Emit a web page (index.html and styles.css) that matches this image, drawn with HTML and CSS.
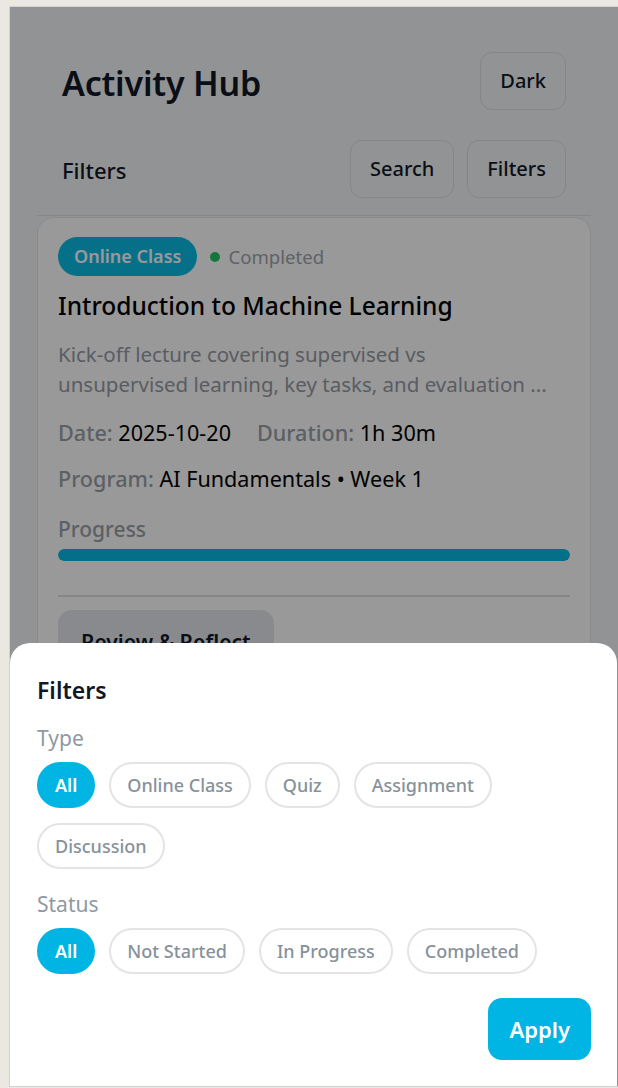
FILE: index.html
```html
<!DOCTYPE html>
<html lang="en">
<head>
<meta charset="utf-8">
<title>Activity Hub</title>
<link rel="stylesheet" href="styles.css">
</head>
<body>
<div class="frame">
  <div class="app">
    <header class="header">
      <div class="header-row">
        <h1 class="title">Activity Hub</h1>
        <button class="btn">Dark</button>
      </div>
      <div class="header-row row2">
        <h2 class="subtitle">Filters</h2>
        <div class="actions">
          <button class="btn">Search</button>
          <button class="btn">Filters</button>
        </div>
      </div>
    </header>
    <main class="list">
      <article class="card">
        <div class="card-top">
          <span class="badge">Online Class</span>
          <span class="status"><span class="dot"></span>Completed</span>
        </div>
        <h3 class="card-title">Introduction to Machine Learning</h3>
        <p class="desc">Kick-off lecture covering supervised vs<br>unsupervised learning, key tasks, and evaluation ...</p>
        <div class="meta">
          <span><span class="lbl">Date:</span> 2025-10-20</span>
          <span><span class="lbl">Duration:</span> 1h 30m</span>
        </div>
        <div class="meta meta2">
          <span><span class="lbl">Program:</span> AI Fundamentals • Week 1</span>
        </div>
        <div class="progress-label">Progress</div>
        <div class="bar"><div class="bar-fill" style="width:100%"></div></div>
        <div class="divider"></div>
        <button class="reflect">Review &amp; Reflect</button>
      </article>
    </main>
  </div>
  <div class="overlay"></div>
  <div class="sheet">
    <h2 class="sheet-title">Filters</h2>
    <div class="group-label">Type</div>
    <div class="chips">
      <button class="chip active">All</button>
      <button class="chip">Online Class</button>
      <button class="chip">Quiz</button>
      <button class="chip">Assignment</button>
      <button class="chip">Discussion</button>
    </div>
    <div class="group-label status-label">Status</div>
    <div class="chips">
      <button class="chip active">All</button>
      <button class="chip">Not Started</button>
      <button class="chip">In Progress</button>
      <button class="chip">Completed</button>
    </div>
    <div class="sheet-footer">
      <button class="apply">Apply</button>
    </div>
  </div>
</div>
</body>
</html>
```

FILE: styles.css
```css
* { box-sizing: border-box; }
html, body { margin: 0; padding: 0; }
body {
  background: #ebe7e1;
  font-family: "Noto Sans", "Open Sans", sans-serif;
  overflow: hidden;
  height: 1088px;
  padding: 6px 0 0 9px;
}
.frame {
  position: relative;
  width: 610px;
  height: 1081px;
  border: 1px solid #d2d2d2;
  background: #f4f5f7;
  overflow: hidden;
}
.app {
  padding: 0 27px;
}
.header {
  padding: 45px 25px 17px;
  border-bottom: 1px solid #dfe1e4;
}
.header-row {
  display: flex;
  align-items: center;
  justify-content: space-between;
}
.row2 { margin-top: 30px; }
.title {
  margin: 0;
  padding-top: 3px;
  font-size: 34px;
  font-weight: 600;
  color: #111827;
  line-height: 42px;
  letter-spacing: -0.2px;
}
.subtitle {
  margin: 0;
  font-size: 22px;
  font-weight: 500;
  color: #111827;
  padding-top: 2px;
}
.actions { display: flex; gap: 13px; }
.btn {
  font-family: inherit;
  font-size: 20px;
  font-weight: 500;
  color: #111827;
  background: transparent;
  border: 1px solid #dcdee2;
  border-radius: 12px;
  padding: 14px 19px;
  line-height: 28px;
}
.list { padding-top: 1px; }
.card {
  background: #fff;
  border: 1px solid #e4e6e9;
  border-radius: 16px;
  padding: 19px 20px 40px;
}
.card-top { display: flex; align-items: center; gap: 13px; }
.badge {
  background: #0bbbe5;
  color: #fff;
  font-size: 18px;
  font-weight: 600;
  line-height: 27px;
  padding: 6px 16px;
  border-radius: 999px;
}
.status {
  display: flex;
  align-items: center;
  gap: 8px;
  font-size: 18.6px;
  color: #9ea4ac;
}
.dot { width: 10px; height: 10px; border-radius: 50%; background: #22c55e; }
.card-title {
  margin: 14px 0 0;
  font-size: 24.5px;
  font-weight: 500;
  line-height: 32px;
  color: #000;
}
.desc {
  margin: 17px 0 0;
  font-size: 20.5px;
  line-height: 30px;
  color: #959ba3;
  white-space: nowrap;
}
.meta {
  margin-top: 19px;
  display: flex;
  gap: 26px;
  font-size: 21.6px;
  line-height: 30px;
  color: #000;
}
.meta2 { margin-top: 16px; }
.lbl { color: #9aa0a7; font-weight: 500; }
.progress-label {
  margin-top: 20px;
  font-size: 21px;
  line-height: 30px;
  font-weight: 500;
  color: #9aa0a7;
}
.bar {
  margin-top: 5px;
  height: 12px;
  border-radius: 999px;
  background: #e5e7eb;
  overflow: hidden;
}
.bar-fill { height: 100%; background: #06b9e4; border-radius: 999px; }
.divider { margin-top: 34px; height: 2px; background: #e0e2e5; }
.reflect {
  margin-top: 13px;
  font-family: inherit;
  font-size: 21px;
  font-weight: 600;
  color: #111827;
  background: #e5e7eb;
  border: none;
  border-radius: 14px;
  padding: 17px 23px;
  line-height: 30px;
}
.overlay {
  position: absolute;
  inset: 0;
  background: rgba(0, 0, 0, 0.4);
}
.sheet {
  position: absolute;
  left: 0;
  right: 1px;
  bottom: 0;
  height: 443px;
  background: #fff;
  border-radius: 20px 20px 0 0;
  padding: 30px 26px 0 27px;
}
.sheet-title {
  margin: 0;
  font-size: 23px;
  font-weight: 600;
  line-height: 34px;
  color: #111827;
}
.group-label {
  margin-top: 17px;
  font-size: 21px;
  line-height: 28px;
  color: #8f98a3;
}
.status-label { margin-top: 21px; }
.chips {
  margin-top: 10px;
  display: flex;
  flex-wrap: wrap;
  gap: 15px 14px;
}
.chip {
  font-family: inherit;
  font-size: 18px;
  font-weight: 500;
  line-height: 24px;
  color: #87919c;
  background: #fff;
  border: 2px solid #e3e4e6;
  border-radius: 999px;
  padding: 9px 16px;
  height: 46px;
}
.chip.active {
  background: #00b4e3;
  border-color: #00b4e3;
  color: #fff;
  font-weight: 600;
}
.sheet-footer {
  margin-top: 24px;
  display: flex;
  justify-content: flex-end;
}
.apply {
  font-family: inherit;
  font-size: 22px;
  font-weight: 600;
  color: #fff;
  background: #00b4e3;
  border: none;
  border-radius: 14px;
  padding: 15px 21px;
  line-height: 32px;
}
```
